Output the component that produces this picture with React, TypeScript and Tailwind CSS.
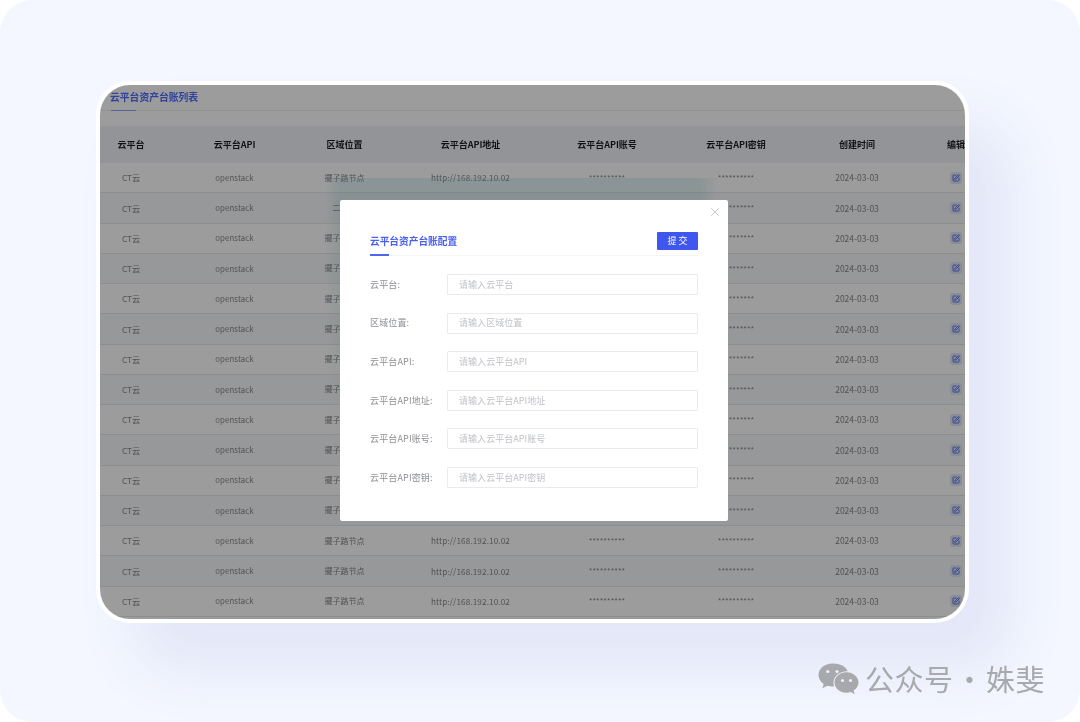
import { SquarePen, X } from "lucide-react";

const cols = [
  { label: "云平台", w: "w-[62px]" },
  { label: "云平台API", w: "w-[145px]" },
  { label: "区域位置", w: "w-[75px]" },
  { label: "云平台API地址", w: "w-[177px]" },
  { label: "云平台API账号", w: "w-[96px]" },
  { label: "云平台API密钥", w: "w-[162px]" },
  { label: "创建时间", w: "w-[80px]" },
  { label: "编辑", w: "w-[118px]" },
];

const fields = [
  ["云平台:", "请输入云平台"],
  ["区域位置:", "请输入区域位置"],
  ["云平台API:", "请输入云平台API"],
  ["云平台API地址:", "请输入云平台API地址"],
  ["云平台API账号:", "请输入云平台API账号"],
  ["云平台API密钥:", "请输入云平台API密钥"],
];

const rows = Array.from({ length: 15 }, (_, i) => i);

function Cell({ w, children }: { w: string; children?: React.ReactNode }) {
  return <div className={`${w} shrink-0 flex items-center justify-center whitespace-nowrap`}>{children}</div>;
}

function WeChat() {
  return (
    <svg width="41" height="31" viewBox="0 0 41 31" className="shrink-0">
      <path d="M14.5 0.5C6.6 0.5 0.5 5.6 0.5 12c0 3.6 2 6.8 5.2 9L4.3 25.3l5-2.6c1.6.5 3.4.8 5.2.8.6 0 1.1 0 1.6-.1-.4-1.2-.6-2.5-.6-3.8 0-6.4 6-11.4 13.4-11.4h.8C28.1 3.5 21.9.5 14.5.5z" fill="#a8a9ac" />
      <circle cx="9.8" cy="8.5" r="1.6" fill="#eef1fa" />
      <circle cx="19" cy="8.5" r="1.6" fill="#eef1fa" />
      <path d="M40.5 19.5c0-5.6-5.5-10.2-12-10.2s-12 4.6-12 10.2 5.5 10.2 12 10.2c1.4 0 2.700-.2 4-.6l4.200 2-1.100-3.600c3-1.900 4.900-4.800 4.900-8z" fill="#a8a9ac" />
      <circle cx="24.500" cy="17.500" r="1.500" fill="#eef1fa" />
      <circle cx="32.500" cy="17.500" r="1.500" fill="#eef1fa" />
    </svg>
  );
}

export default function App() {
  return (
    <div className="w-[1080px] h-[722px] bg-white font-['Noto_Sans_CJK_SC',sans-serif] overflow-hidden">
      <div className="relative w-full h-full rounded-[32px] bg-[#f4f7ff] pl-[96px] pt-[81px] overflow-hidden blur-[0.35px]">
        <div className="w-[873px] h-[542px] rounded-[34px] border-[4px] border-white bg-white shadow-[40px_45px_60px_rgba(70,90,180,0.1)]">
          <div className="relative w-full h-full rounded-[30px] overflow-hidden bg-white">
            <div className="h-[26px] pl-[10px] pt-[4px] border-b border-[#eceef2] relative">
              <span className="text-[9.8px] leading-[16px] font-semibold text-[#4f6cff] block">云平台资产台账列表</span>
              <div className="absolute left-[11px] bottom-[-1px] w-[25px] h-[1px] bg-[#8aa0ff]" />
            </div>
            <div className="h-[15px]" />
            <div className="flex h-[37px] bg-[#f1f2f7] text-[9px] font-bold text-[#1d1d1f]">
              {cols.map((c) => (
                <Cell key={c.label} w={c.w}>{c.label}</Cell>
              ))}
            </div>
            {rows.map((i) => {
              const covered = i >= 1 && i <= 11;
              return (
                <div
                  key={i}
                  className={`flex h-[30.25px] border-b border-[#e6e7ec] text-[#85878a] ${i % 2 ? "bg-[#f7f8fa]" : "bg-white"}`}
                >
                  <Cell w={cols[0].w}><span className="text-[8.2px]">CT云</span></Cell>
                  <Cell w={cols[1].w}><span className="text-[7.8px] tracking-[0.1px]">openstack</span></Cell>
                  <Cell w={cols[2].w}><span className="text-[8px]">{i === 1 ? "二七区" : "擺子路节点"}</span></Cell>
                  <Cell w={cols[3].w}>{!covered && <span className="text-[8.2px] tracking-[0.1px]">http://168.192.10.02</span>}</Cell>
                  <Cell w={cols[4].w}>{!covered && <span className="text-[7.8px]">**********</span>}</Cell>
                  <Cell w={cols[5].w}><span className="text-[7.8px]">**********</span></Cell>
                  <Cell w={cols[6].w}><span className="text-[8.5px]">2024-03-03</span></Cell>
                  <Cell w={cols[7].w}>
                    <span className="w-[12px] h-[12px] rounded-[3px] bg-[#e3e7f5] flex items-center justify-center">
                      <SquarePen size={8} strokeWidth={3} className="text-[#5470f0]" />
                    </span>
                  </Cell>
                </div>
              );
            })}
            <div className="absolute left-[225px] top-[93px] w-[392px] h-[260px] bg-linear-to-b from-[#7cc8c8]/22 to-transparent [mask-image:linear-gradient(to_right,transparent,black_14px,black_calc(100%-18px),transparent)]" />
            <div className="absolute inset-0 bg-black/[0.39]" />
            <div className="absolute left-[240px] top-[115px] w-[388px] h-[321px] rounded-[2px] bg-white pt-[32px] px-[30px]">
              <X size={14} strokeWidth={1} className="absolute right-[6px] top-[5px] text-[#a0a2a8]" />
              <div className="relative flex items-center justify-between h-[24px] border-b border-[#f2f4f8] pb-[5px]">
                <span className="text-[9.7px] font-semibold text-[#4a60ee]">云平台资产台账配置</span>
                <span className="w-[41px] h-[18px] rounded-[1px] bg-[#3f57ee] text-white text-[9px] flex items-center justify-center">提 交</span>
                <div className="absolute left-0 bottom-[-1px] w-[19px] h-[2px] bg-[#4f66ee]" />
              </div>
              <div className="mt-[18px] flex flex-col gap-[17.6px]">
                {fields.map(([label, ph]) => (
                  <div key={label} className="flex items-center h-[21px]">
                    <span className="w-[77px] shrink-0 text-[9px] text-[#8d8f94] whitespace-nowrap tracking-[0.15px]">{label}</span>
                    <div className="w-[251px] h-[21px] rounded-[1px] border border-[#e9ebf0] pl-[11px] flex items-center text-[9px] text-[#c0c2c7] tracking-[0.05px]">{ph}</div>
                  </div>
                ))}
              </div>
            </div>
          </div>
        </div>
        <div className="absolute left-[818px] top-[663px] flex items-center gap-[6px]">
          <WeChat />
          <span className="text-[29px] leading-[31px] text-[#a8a9ac] whitespace-nowrap tracking-[0.5px] [word-spacing:-5.5px]">公众号 · 姝斐</span>
        </div>
      </div>
    </div>
  );
}
